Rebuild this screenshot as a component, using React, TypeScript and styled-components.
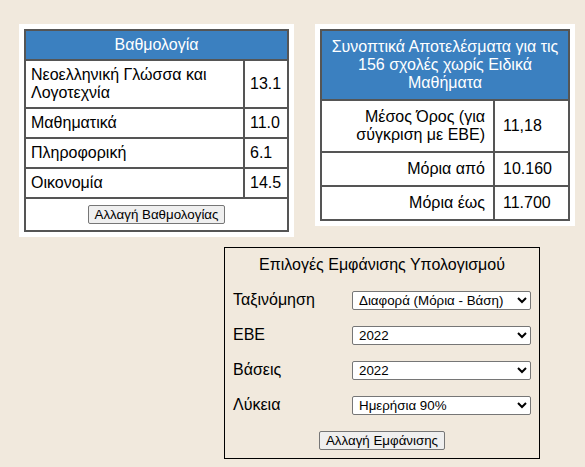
import React from 'react'
import styled, { createGlobalStyle } from 'styled-components'

const GlobalStyle = createGlobalStyle`
  html, body {
    margin: 0;
    padding: 0;
    background: #f1e9dd;
    font-family: "Liberation Sans", Arial, sans-serif;
    color: #000;
  }
`

const Page = styled.div`
  padding: 24px 0 0 19px;
`

const TopRow = styled.div`
  display: flex;
  align-items: flex-start;
  gap: 21px;
`

const Card = styled.div`
  background: #fff;
  padding: 5px;
`

const Table = styled.table<{ $width: number }>`
  width: ${(p) => p.$width}px;
  border-collapse: collapse;
  border: 2px solid #555;
  font-size: 16px;
  line-height: 18px;
`

const HeadCell = styled.th<{ $pad: number }>`
  background: #3b80c0;
  color: #fff;
  font-weight: normal;
  text-align: center;
  padding: ${(p) => p.$pad}px 8px;
  border: 2px solid #555;
`

const Cell = styled.td<{ $pad: number; $align?: string; $w?: number }>`
  border: 2px solid #555;
  padding: ${(p) => p.$pad}px ${(p) => (p.$pad > 5 ? 8 : 5)}px;
  text-align: ${(p) => p.$align || 'left'};
  vertical-align: middle;
  ${(p) => (p.$w ? `width: ${p.$w}px;` : '')}
`

const ButtonCell = styled.td`
  border: 2px solid #555;
  padding: 6px 5px;
  text-align: center;
`

const Button = styled.button`
  font-family: "Liberation Sans", Arial, sans-serif;
  font-size: 13.33px;
  color: #000;
  background: #efefef;
  border: 1px solid #767676;
  border-radius: 2px;
  padding: 1px 6px;
  line-height: 15px;
`

const OptionsBox = styled.div`
  margin: 10px 0 0 205px;
  width: 298px;
  border: 1px solid #000;
  padding: 8px 8px 8px 8px;
`

const Title = styled.div`
  text-align: center;
  font-size: 16px;
  line-height: 18px;
`

const OptionsGrid = styled.div`
  display: grid;
  grid-template-columns: 119px 179px;
  row-gap: 16px;
  margin-top: 17px;
  align-items: center;
`

const Label = styled.label`
  font-size: 16px;
  line-height: 18px;
  margin-top: -2px;
`

const Select = styled.select`
  width: 179px;
  height: 19px;
  font-family: "Liberation Sans", Arial, sans-serif;
  font-size: 13.33px;
  color: #000;
  background: #fff;
  border: 1px solid #767676;
  border-radius: 2px;
  padding: 0 0 0 2px;
`

const ButtonRow = styled.div`
  display: flex;
  justify-content: center;
  margin-top: 16px;
`

const grades = [
  { name: 'Νεοελληνική Γλώσσα και Λογοτεχνία', value: '13.1' },
  { name: 'Μαθηματικά', value: '11.0' },
  { name: 'Πληροφορική', value: '6.1' },
  { name: 'Οικονομία', value: '14.5' },
]

const summary = [
  { name: 'Μέσος Όρος (για σύγκριση με ΕΒΕ)', value: '11,18' },
  { name: 'Μόρια από', value: '10.160' },
  { name: 'Μόρια έως', value: '11.700' },
]

const options = [
  { label: 'Ταξινόμηση', value: 'Διαφορά (Μόρια - Βάση)' },
  { label: 'ΕΒΕ', value: '2022' },
  { label: 'Βάσεις', value: '2022' },
  { label: 'Λύκεια', value: 'Ημερήσια 90%' },
]

const App: React.FC = () => {
  return (
    <Page>
      <GlobalStyle />
      <TopRow>
        <Card>
          <Table $width={265}>
            <thead>
              <tr>
                <HeadCell $pad={5} colSpan={2}>
                  Βαθμολογία
                </HeadCell>
              </tr>
            </thead>
            <tbody>
              {grades.map((g) => (
                <tr key={g.name}>
                  <Cell $pad={5}>{g.name}</Cell>
                  <Cell $pad={5} $w={32}>
                    {g.value}
                  </Cell>
                </tr>
              ))}
              <tr>
                <ButtonCell colSpan={2}>
                  <Button>Αλλαγή Βαθμολογίας</Button>
                </ButtonCell>
              </tr>
            </tbody>
          </Table>
        </Card>
        <Card>
          <Table $width={250}>
            <thead>
              <tr>
                <HeadCell $pad={7} colSpan={2}>
                  Συνοπτικά Αποτελέσματα για τις 156 σχολές χωρίς Ειδικά
                  Μαθήματα
                </HeadCell>
              </tr>
            </thead>
            <tbody>
              {summary.map((s) => (
                <tr key={s.name}>
                  <Cell $pad={7} $align="right">
                    {s.name}
                  </Cell>
                  <Cell $pad={7} $w={57}>
                    {s.value}
                  </Cell>
                </tr>
              ))}
            </tbody>
          </Table>
        </Card>
      </TopRow>
      <OptionsBox>
        <Title>Επιλογές Εμφάνισης Υπολογισμού</Title>
        <OptionsGrid>
          {options.map((o) => (
            <React.Fragment key={o.label}>
              <Label>{o.label}</Label>
              <Select defaultValue={o.value}>
                <option>{o.value}</option>
              </Select>
            </React.Fragment>
          ))}
        </OptionsGrid>
        <ButtonRow>
          <Button>Αλλαγή Εμφάνισης</Button>
        </ButtonRow>
      </OptionsBox>
    </Page>
  )
}

export default App
